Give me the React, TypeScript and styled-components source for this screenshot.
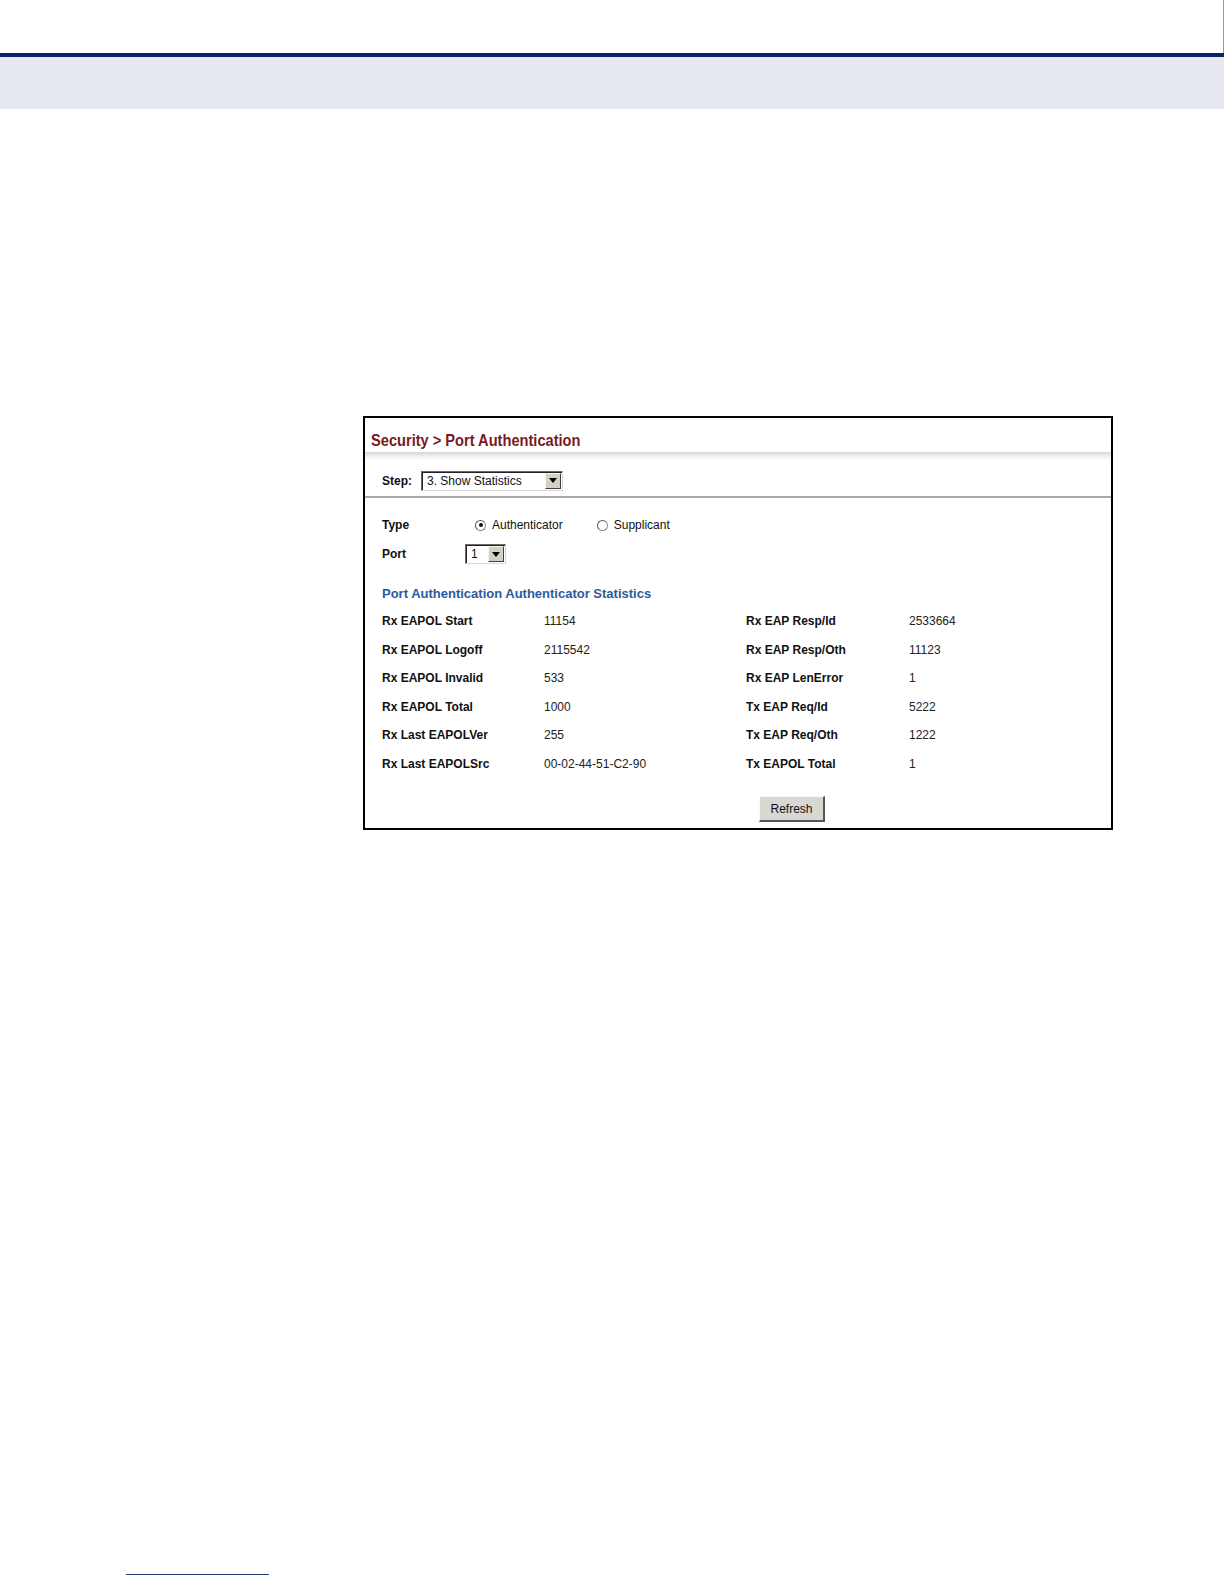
import React from "react";
import styled, { createGlobalStyle } from "styled-components";

const Global = createGlobalStyle`
  html, body { margin: 0; padding: 0; background: #fff; }
  body { font-family: "Liberation Sans", Arial, sans-serif; color: #111; }
`;

const Page = styled.div`
  width: 1224px;
  height: 1584px;
  display: flex;
  flex-direction: column;
  overflow: hidden;
`;

const TopStrip = styled.div`
  height: 53px;
  display: flex;
  justify-content: flex-end;
`;

const EdgeRule = styled.div`
  width: 1px;
  background: #9a9a9a;
`;

const NavyBar = styled.div`
  height: 4px;
  background: #0b2363;
`;

const HeaderBand = styled.div`
  height: 52px;
  background: #e6e9f0;
`;

const Content = styled.div`
  padding: 307px 0 0 363px;
`;

const Panel = styled.div`
  width: 746px;
  height: 410px;
  border: 2px solid #000;
  display: flex;
  flex-direction: column;
  background: #fff;
`;

const TitleBar = styled.div`
  height: 34px;
  display: flex;
  align-items: flex-end;
  padding: 0 0 1px 6px;
  box-sizing: border-box;
`;

const Title = styled.div`
  display: inline-block;
  font-family: "Liberation Sans", Arial, sans-serif;
  font-weight: bold;
  font-size: 17px;
  color: #7a1a1e;
  line-height: 20px;
  white-space: nowrap;
  transform: scaleX(0.86);
  transform-origin: left center;
`;

const Shade = styled.div`
  height: 8px;
  background: linear-gradient(to bottom, #d6d6d6 0%, #ececec 45%, #ffffff 100%);
`;

const StepRow = styled.div`
  height: 38px;
  box-sizing: border-box;
  padding: 5px 0 0 17px;
  display: flex;
  align-items: center;
  gap: 9px;
  border-bottom: 2px solid #a8a8a8;
`;

const Label = styled.span`
  font-weight: bold;
  font-size: 12px;
  color: #111;
`;

const Select = styled.div<{ $w: number }>`
  width: ${(p) => p.$w}px;
  height: 20px;
  box-sizing: border-box;
  display: flex;
  align-items: stretch;
  border-top: 1px solid #6a6a6a;
  border-left: 1px solid #6a6a6a;
  border-right: 1px solid #d8d8d8;
  border-bottom: 1px solid #d8d8d8;
  box-shadow: inset 1px 1px 0 #222;
  background: #fff;
`;

const SelectText = styled.span`
  flex: 1;
  font-size: 12px;
  line-height: 18px;
  padding-left: 5px;
  color: #111;
`;

const ArrowBtn = styled.span`
  width: 16px;
  margin: 1px 1px 1px 0;
  background: #d4d0c8;
  border-top: 1px solid #f4f4f4;
  border-left: 1px solid #f4f4f4;
  border-right: 1px solid #404040;
  border-bottom: 1px solid #404040;
  box-sizing: border-box;
  display: flex;
  align-items: center;
  justify-content: center;
`;

const Body = styled.div`
  display: flex;
  flex-direction: column;
  padding: 17px 0 0 17px;
`;

const FormRow = styled.div<{ $mt?: number }>`
  height: 20px;
  display: flex;
  align-items: center;
  margin-top: ${(p) => p.$mt ?? 0}px;
`;

const FormLabel = styled(Label)`
  width: 83px;
`;

const RadioItem = styled.span`
  display: inline-flex;
  align-items: center;
  gap: 6px;
  font-size: 12px;
  color: #111;
  margin-left: 10px;
  & + & {
    margin-left: 34px;
  }
`;

const Radio = styled.span<{ $on?: boolean }>`
  width: 11px;
  height: 11px;
  border-radius: 50%;
  box-sizing: border-box;
  border: 1px solid #8a8a8a;
  border-top-color: #555;
  border-left-color: #555;
  background: #fff;
  display: inline-flex;
  align-items: center;
  justify-content: center;
  &::after {
    content: "";
    width: 4px;
    height: 4px;
    border-radius: 50%;
    background: ${(p) => (p.$on ? "#111" : "transparent")};
  }
`;

const SectionHead = styled.div`
  margin-top: 20px;
  height: 20px;
  line-height: 20px;
  font-weight: bold;
  font-size: 13px;
  color: #2d5a9e;
`;

const StatsGrid = styled.div`
  margin-top: 3px;
  display: grid;
  grid-template-columns: 162px 202px 163px 1fr;
  grid-auto-rows: 28.5px;
  align-items: center;
`;

const StatLabel = styled.span`
  font-weight: bold;
  font-size: 12px;
  color: #111;
`;

const StatValue = styled.span`
  font-size: 12px;
  color: #222;
`;

const ButtonRow = styled.div`
  margin-top: 18px;
  padding-left: 377px;
  display: flex;
`;

const Button = styled.button`
  width: 66px;
  height: 26px;
  font-family: "Liberation Sans", Arial, sans-serif;
  font-size: 12px;
  color: #111;
  background: #d9d7d1;
  border-top: 1px solid #fafafa;
  border-left: 1px solid #fafafa;
  border-right: 2px solid #555;
  border-bottom: 2px solid #555;
  padding: 0;
`;

const Footer = styled.div`
  margin-top: auto;
  height: 10px;
  padding-left: 126px;
`;

const FootRule = styled.div`
  width: 143px;
  height: 1px;
  background: #2a3b78;
`;

const Triangle = () => (
  <svg width="8" height="5" viewBox="0 0 8 5">
    <path d="M0 0 H8 L4 5 Z" fill="#000" />
  </svg>
);

const stats: [string, string, string, string][] = [
  ["Rx EAPOL Start", "11154", "Rx EAP Resp/Id", "2533664"],
  ["Rx EAPOL Logoff", "2115542", "Rx EAP Resp/Oth", "11123"],
  ["Rx EAPOL Invalid", "533", "Rx EAP LenError", "1"],
  ["Rx EAPOL Total", "1000", "Tx EAP Req/Id", "5222"],
  ["Rx Last EAPOLVer", "255", "Tx EAP Req/Oth", "1222"],
  ["Rx Last EAPOLSrc", "00-02-44-51-C2-90", "Tx EAPOL Total", "1"],
];

export default function App() {
  return (
    <>
      <Global />
      <Page>
        <TopStrip>
          <EdgeRule />
        </TopStrip>
        <NavyBar />
        <HeaderBand />
        <Content>
          <Panel>
            <TitleBar>
              <Title>Security &gt; Port Authentication</Title>
            </TitleBar>
            <Shade />
            <StepRow>
              <Label>Step:</Label>
              <Select $w={142}>
                <SelectText>3. Show Statistics</SelectText>
                <ArrowBtn>
                  <Triangle />
                </ArrowBtn>
              </Select>
            </StepRow>
            <Body>
              <FormRow>
                <FormLabel>Type</FormLabel>
                <RadioItem>
                  <Radio $on />
                  Authenticator
                </RadioItem>
                <RadioItem>
                  <Radio />
                  Supplicant
                </RadioItem>
              </FormRow>
              <FormRow $mt={9}>
                <FormLabel>Port</FormLabel>
                <Select $w={41}>
                  <SelectText>1</SelectText>
                  <ArrowBtn>
                    <Triangle />
                  </ArrowBtn>
                </Select>
              </FormRow>
              <SectionHead>Port Authentication Authenticator Statistics</SectionHead>
              <StatsGrid>
                {stats.map(([a, b, c, d]) => (
                  <React.Fragment key={a}>
                    <StatLabel>{a}</StatLabel>
                    <StatValue>{b}</StatValue>
                    <StatLabel>{c}</StatLabel>
                    <StatValue>{d}</StatValue>
                  </React.Fragment>
                ))}
              </StatsGrid>
              <ButtonRow>
                <Button>Refresh</Button>
              </ButtonRow>
            </Body>
          </Panel>
        </Content>
        <Footer>
          <FootRule />
        </Footer>
      </Page>
    </>
  );
}
